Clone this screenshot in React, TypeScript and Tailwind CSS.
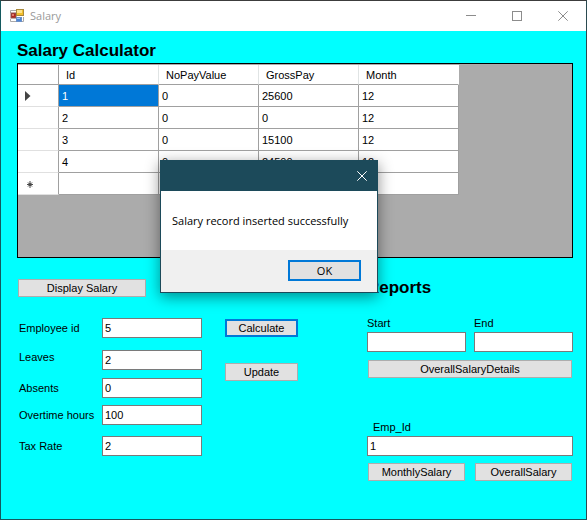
import type { ReactNode } from "react";

const columns = ["Id", "NoPayValue", "GrossPay", "Month"];

const rows = [
  ["1", "0", "25600", "12"],
  ["2", "0", "0", "12"],
  ["3", "0", "15100", "12"],
  ["4", "0", "24500", "12"],
  ["", "", "", ""],
];

function FormIcon() {
  return (
    <svg width="14" height="14" viewBox="0 0 14 14" aria-hidden="true">
      <path d="M0.5 4V1.5H6M0.5 10V12.5H6M13.5 8V12.5H11" fill="none" stroke="#a9a9a9" />
      <rect x="1" y="4" width="5" height="5" fill="#b3261e" stroke="#8a5550" />
      <rect x="2" y="5" width="2" height="2" fill="#e0796c" />
      <rect x="6.5" y="0.5" width="7" height="6" fill="#f3c02c" stroke="#a98a3c" />
      <rect x="7" y="1" width="5" height="3" fill="#fde28a" />
      <rect x="6.5" y="8.5" width="5" height="4" fill="#4d86d6" stroke="#6a8fc6" />
      <rect x="7" y="9" width="3" height="1" fill="#a9c8f0" />
    </svg>
  );
}

function CloseGlyph({ size }: { size: number }) {
  return (
    <svg width={size} height={size} viewBox="0 0 10 10" stroke="currentColor" fill="none" aria-hidden="true">
      <path d="M0.3 0.3L9.7 9.7M9.7 0.3L0.3 9.7" />
    </svg>
  );
}

function TitleBar() {
  const control = "flex w-[46px] items-center justify-center text-[#8c8c8c]";
  return (
    <header className="flex h-[30px] bg-white pl-[9px]">
      <div className="flex flex-1 items-center gap-[6px]">
        <FormIcon />
        <h1 className="font-['Open_Sans',sans-serif] text-[11px] leading-4 text-[#999999]">Salary</h1>
      </div>
      <button type="button" aria-label="Minimize" className={control}>
        <svg width="10" height="10" viewBox="0 0 10 10" stroke="currentColor" aria-hidden="true">
          <path d="M0 4.5H10" />
        </svg>
      </button>
      <button type="button" aria-label="Maximize" className={control}>
        <svg width="10" height="10" viewBox="0 0 10 10" stroke="currentColor" fill="none" aria-hidden="true">
          <rect x="0.5" y="0.5" width="9" height="9" />
        </svg>
      </button>
      <button type="button" aria-label="Close" className={control}>
        <CloseGlyph size={10} />
      </button>
    </header>
  );
}

function SalaryGrid() {
  return (
    <div className="h-[195px] border border-black bg-[#ababab] pt-px">
      <table className="w-[441px] table-fixed border-separate border-spacing-0 bg-white">
        <thead>
          <tr className="h-5">
            <th className="w-[41px] border-r border-b border-r-[#a0a0a0] border-b-[#a0a0a0] p-0" />
            {columns.map((name) => (
              <th
                key={name}
                scope="col"
                className="border-r border-b border-r-[#e0e4e4] border-b-[#a0a0a0] py-0 pr-0 pl-[7px] text-left font-normal last:border-r-white"
              >
                {name}
              </th>
            ))}
          </tr>
        </thead>
        <tbody>
          {rows.map((row, r) => (
            <tr key={r} className="h-[22px]">
              <th className="border-r border-b border-r-[#a0a0a0] border-b-[#e0e0e0] py-0 pr-0 pl-[7px] text-left">
                {r === 0 && (
                  <svg width="6" height="10" viewBox="0 0 6 10" fill="#444444" aria-hidden="true">
                    <path d="M0 0L5.5 5L0 10Z" />
                  </svg>
                )}
                {r === rows.length - 1 && (
                  <svg width="10" height="8" viewBox="0 0 10 8" stroke="#4a4a4a" aria-hidden="true">
                    <circle cx="5" cy="4.5" r="1.5" fill="#4a4a4a" stroke="none" />
                    <path d="M5 1V8M2 4.5H8M3 2.5L7 6.5M7 2.5L3 6.5" />
                  </svg>
                )}
              </th>
              {row.map((value, c) => (
                <td
                  key={c}
                  className={
                    r === 0 && c === 0
                      ? "border-r border-b border-[#a0a0a0] bg-[#0078d7] py-0 pr-0 pl-[3px] text-white"
                      : "border-r border-b border-[#a0a0a0] py-0 pr-0 pl-[3px]"
                  }
                >
                  {value}
                </td>
              ))}
            </tr>
          ))}
        </tbody>
      </table>
    </div>
  );
}

function FormButton({ children, className = "" }: { children: ReactNode; className?: string }) {
  return (
    <button
      type="button"
      className={`h-[18px] border bg-[#e1e1e1] text-center leading-4 ${className || "border-[#adadad]"}`}
    >
      {children}
    </button>
  );
}

const inputStyle = "h-5 w-full min-w-0 border border-[#7a7a7a] bg-white px-[2px] text-[11px] outline-none";

function Field({ id, label, value, className = "" }: { id: string; label: string; value: string; className?: string }) {
  return (
    <div className={`flex items-center ${className}`}>
      <label
        htmlFor={id}
        className={id === "leaves" ? "w-[85px] shrink-0 self-start pl-[2px]" : "w-[85px] shrink-0 pl-[2px]"}
      >
        {label}
      </label>
      <input id={id} defaultValue={value} className={inputStyle} />
    </div>
  );
}

function MessageBox() {
  return (
    <div
      role="dialog"
      aria-label="Message"
      className="absolute top-[159px] left-[159px] w-[218px] border border-[#1c4a5a] bg-white font-['Open_Sans',sans-serif] shadow-[0_4px_14px_rgba(0,0,0,0.45)]"
    >
      <div className="flex h-[30px] justify-end bg-[#1c4a5a]">
        <button type="button" aria-label="Close message" className="flex w-[30px] items-center justify-center text-white">
          <CloseGlyph size={10} />
        </button>
      </div>
      <p className="px-[11px] pt-[22px] pb-[21px] leading-4 whitespace-nowrap">Salary record inserted successfully</p>
      <div className="flex justify-end bg-[#f0f0f0] pt-[10px] pr-4 pb-[11px]">
        <button type="button" className="h-[21px] w-[73px] border-2 border-[#0078d7] bg-[#e1e1e1] leading-4">
          OK
        </button>
      </div>
    </div>
  );
}

const headingStyle = "text-[17px] leading-5 font-bold";

export default function App() {
  return (
    <div className="relative flex min-h-screen flex-col border border-t-[#3c3c3c] border-r-[#2a4a50] border-b-[#14595e] border-l-[#14595e] bg-[#00ffff] font-['Liberation_Sans',Arial,sans-serif] text-[11px] leading-[14px] text-black">
      <TitleBar />
      <main className="flex-1 pt-[10px] pr-[13px] pl-4">
        <h2 className={`pb-[2px] ${headingStyle}`}>Salary Calculator</h2>
        <SalaryGrid />

        <div className="flex justify-between pt-5">
          <section className="flex">
            <div className="w-[185px] pt-px">
              <FormButton className="ml-px w-[128px] border-[#adadad]">Display Salary</FormButton>
              <Field id="employee" label="Employee id" value="5" className="mt-[21px]" />
              <Field id="leaves" label="Leaves" value="2" className="mt-3" />
              <Field id="absents" label="Absents" value="0" className="mt-2" />
              <Field id="overtime" label="Overtime hours" value="100" className="mt-[7px]" />
              <Field id="tax" label="Tax Rate" value="2" className="mt-[11px]" />
            </div>
            <div className="ml-[23px] flex w-[73px] flex-col gap-[26px] pt-[41px]">
              <FormButton className="border-2 border-[#0078d7] leading-[14px]">Calculate</FormButton>
              <FormButton>Update</FormButton>
            </div>
          </section>

          <section className="w-[206px]">
            <h2 className={headingStyle}>Reports</h2>
            <div className="grid grid-cols-2 gap-2 pt-[18px]">
              <div>
                <label htmlFor="start" className="block pb-[2px]">Start</label>
                <input id="start" className={inputStyle} />
              </div>
              <div>
                <label htmlFor="end" className="block pb-[2px]">End</label>
                <input id="end" className={inputStyle} />
              </div>
            </div>
            <div className="flex flex-col px-px pt-2">
              <FormButton>OverallSalaryDetails</FormButton>
            </div>
            <div className="pt-[42px]">
              <label htmlFor="empId" className="block pb-[2px] pl-[6px]">Emp_Id</label>
              <input id="empId" defaultValue="1" className={inputStyle} />
            </div>
            <div className="grid grid-cols-2 gap-[10px] px-px pt-[7px]">
              <FormButton>MonthlySalary</FormButton>
              <FormButton>OverallSalary</FormButton>
            </div>
          </section>
        </div>
      </main>
      <MessageBox />
    </div>
  );
}
